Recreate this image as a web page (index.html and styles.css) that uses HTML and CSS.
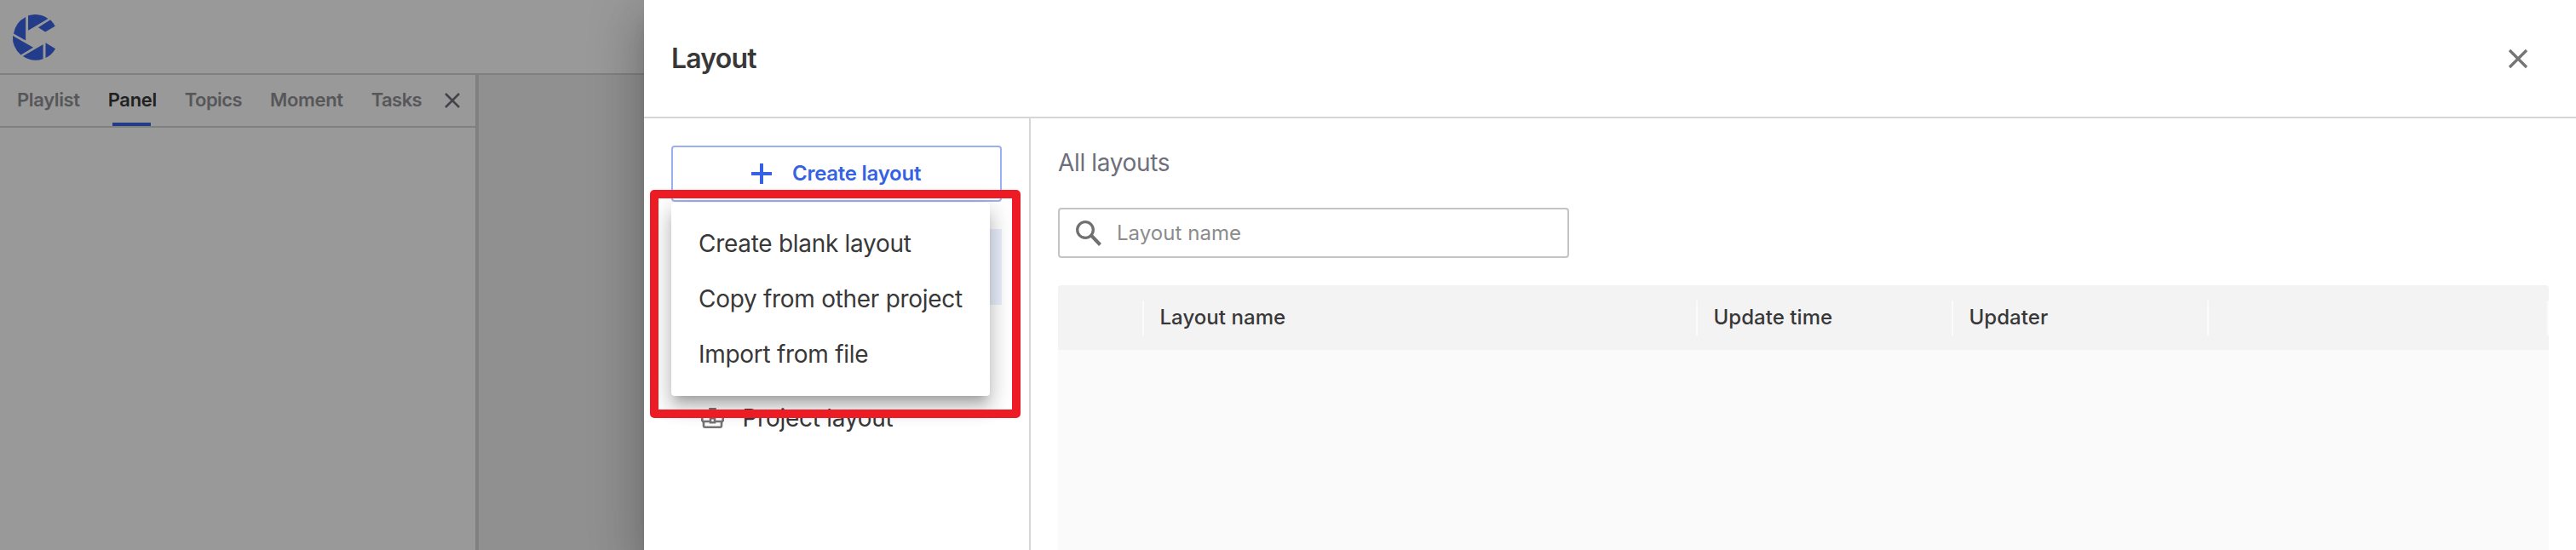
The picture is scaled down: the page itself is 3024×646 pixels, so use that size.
FILE: index.html
```html
<!DOCTYPE html>
<html lang="en">
<head>
<meta charset="utf-8">
<title>Layout</title>
<link rel="stylesheet" href="styles.css">
</head>
<body>
<div class="app">
  <header class="topbar">
    <svg class="logo" viewBox="43 50 154 164" aria-label="Logo">
      <path d="M90 59V143L47 118A82 82 0 0 1 90 59Z"/>
      <path d="M99 54A82 82 0 0 1 170 65L99 107Z"/>
      <path d="M178 69A82 82 0 0 1 195 92L160 112L135 96Z"/>
      <path d="M44 126L117 168L73 194A82 82 0 0 1 44 126Z"/>
      <path d="M80 199L152 157V209A82 82 0 0 1 80 199Z"/>
      <path d="M161 151L196 172A82 82 0 0 1 161 205Z"/>
    </svg>
  </header>
  <div class="workspace">
    <aside class="sidebar">
      <nav class="tabs">
        <span class="tab">Playlist</span>
        <span class="tab active">Panel</span>
        <span class="tab tight">Topics</span>
        <span class="tab">Moment</span>
        <span class="tab tight">Tasks</span>
        <svg class="tabs-close" viewBox="0 0 18 18"><path d="M1 1L17 17M17 1L1 17"/></svg>
      </nav>
    </aside>
    <main class="canvas"></main>
  </div>
</div>
<div class="scrim"></div>
<section class="drawer">
  <header class="drawer-head">
    <h1 class="drawer-title">Layout</h1>
    <svg class="drawer-close" viewBox="0 0 24 24"><path d="M2 2L22 22M22 2L2 22"/></svg>
  </header>
  <div class="drawer-body">
    <aside class="side">
      <button class="create">
        <svg class="plus" viewBox="0 0 24 24"><path d="M12 0V24M0 12H24"/></svg>
        <span class="create-label">Create layout</span>
      </button>
      <div class="side-selected"></div>
      <div class="side-item">
        <svg class="case" viewBox="0 0 27 24"><path d="M10.500 6V1.300H16.500V6M1.300 16V8Q1.300 6 3.300 6H23.700Q25.700 6 25.700 8V16M1 16H10M17 16H26M3 16V21Q3 22.700 4.700 22.700H22.300Q24 22.700 24 21V16M11 12.300H16V17.300H11Z"/></svg>
        <span class="side-label">Project layout</span>
      </div>
      <ul class="menu">
        <li class="menu-item">Create blank layout</li>
        <li class="menu-item">Copy from other project</li>
        <li class="menu-item">Import from file</li>
      </ul>
      <div class="highlight"></div>
    </aside>
    <div class="content">
      <h2 class="content-title">All layouts</h2>
      <div class="search">
        <svg class="search-icon" viewBox="0 0 30 30"><circle cx="11" cy="11" r="9.300"/><path class="handle" d="M18 17.500L28.500 28.500"/></svg>
        <span class="placeholder">Layout name</span>
      </div>
      <div class="table">
        <div class="thead">
          <div class="th"></div>
          <div class="th">Layout name</div>
          <div class="th">Update time</div>
          <div class="th">Updater</div>
          <div class="th"></div>
        </div>
        <div class="tbody"></div>
      </div>
    </div>
  </div>
</section>
</body>
</html>
```
FILE: styles.css
```css
* { box-sizing: border-box; }
body {
  margin: 0;
  height: 646px;
  overflow: hidden;
  position: relative;
  font-family: Inter, "Liberation Sans", sans-serif;
  color: #383838;
  background: #fff;
}
h1, h2, ul { margin: 0; padding: 0; font-weight: 400; }
span, li { white-space: nowrap; }
svg { display: block; fill: none; flex: none; }

.app { display: flex; flex-direction: column; height: 646px; }
.topbar { height: 88px; padding: 17px 0 0 14px; border-bottom: 2px solid #d6d6d6; flex: none; }
.logo { width: 52px; height: 54px; fill: #3a64e6; }
.workspace { display: flex; flex: 1; }
.sidebar { width: 562px; border-right: 4px solid #d6d6d6; }
.canvas { flex: 1; background: #f1f1f1; }
.tabs { display: flex; height: 62px; padding-left: 20px; border-bottom: 2px solid #d6d6d6; font-size: 22px; font-weight: 600; letter-spacing: -.36px; color: #919197; }
.tab { position: relative; line-height: 58px; margin-right: 33px; }
.tight { letter-spacing: -.55px; }
.active { color: #383838; }
.active::after { content: ""; position: absolute; bottom: 0; left: 50%; width: 45px; height: 4px; margin-left: -23px; background: #3a64e6; }
.tabs-close { width: 18px; height: 18px; margin: 21px 0 0 -6.500px; stroke: #70707b; stroke-width: 2.500; }

.scrim { position: absolute; inset: 0; background: rgba(0, 0, 0, .4); }

.drawer {
  position: absolute;
  top: 0; right: 0; bottom: 0; left: 756px;
  display: flex; flex-direction: column;
  background: #fff;
  box-shadow: 0 16px 20px -10px rgba(0, 0, 0, .2), 0 32px 48px 4px rgba(0, 0, 0, .14), 0 12px 60px 10px rgba(0, 0, 0, .12);
}
.drawer-head { display: flex; align-items: center; justify-content: space-between; height: 139px; padding: 0 56px 0 32px; border-bottom: 2px solid #d6d6d6; flex: none; }
.drawer-title { font-size: 32px; font-weight: 600; letter-spacing: -.8px; }
.drawer-close { width: 24px; height: 24px; stroke: #757575; stroke-width: 3.300; }
.drawer-body { display: flex; flex: 1; }

.side { position: relative; width: 454px; padding: 32px 32px 0; border-right: 2px solid #d6d6d6; }
.create { display: flex; align-items: center; width: 388px; height: 66px; padding: 0 0 0 92px; border: 2px solid #9bb0f2; border-radius: 4px; background: #fff; color: #3562e3; font: 600 24px Inter, sans-serif; letter-spacing: -.26px; }
.create-label { padding-bottom: 2px; }
.plus { width: 24px; height: 24px; margin-right: 24px; stroke: #3562e3; stroke-width: 4; }
.side-selected { height: 89px; margin-top: 32px; background: #eaeffc; }
.side-item { display: flex; align-items: center; height: 88px; margin-top: 89px; padding-left: 34.500px; font-size: 28px; letter-spacing: -.27px; }
.case { width: 27px; height: 24px; margin-right: 22px; stroke: #757575; stroke-width: 2.600; }

.menu { position: absolute; left: 32px; top: 99px; width: 374px; height: 227px; padding: 16px 32px; list-style: none; background: #fff; border-radius: 4px; font-size: 28px; letter-spacing: -.29px; box-shadow: 0 10px 10px -6px rgba(0, 0, 0, .2), 0 16px 20px 2px rgba(0, 0, 0, .14), 0 6px 28px 4px rgba(0, 0, 0, .12); }
.menu-item { height: 65px; line-height: 65px; }
.highlight { position: absolute; left: 7px; top: 84px; width: 435px; height: 268px; border: 10px solid #ed1c24; border-radius: 5px; }

.content { flex: 1; display: flex; flex-direction: column; padding: 32px 32px 0; }
.content-title { height: 41px; line-height: 41px; font-size: 28px; letter-spacing: -.36px; color: #6f6f7b; }
.search { display: flex; align-items: center; width: 600px; height: 59px; margin-top: 32px; padding-left: 19px; border: 2px solid #c4c4c4; border-radius: 4px; font-size: 24px; letter-spacing: .05px; color: #8c8c8c; }
.search-icon { width: 30px; height: 30px; margin-right: 18px; stroke: #707070; stroke-width: 3.300; }
.handle { stroke-width: 4; }
.table { flex: 1; display: flex; flex-direction: column; margin-top: 32px; border-radius: 4px 4px 0 0; overflow: hidden; }
.thead { display: grid; grid-template-columns: 101px 650px 300px 300px 1fr; align-items: center; height: 76px; background: #f3f3f3; font-size: 24px; font-weight: 500; letter-spacing: .05px; }
.th { height: 41px; line-height: 39px; padding-left: 18.500px; border-right: 2px solid #fbfbfb; }
.tbody { flex: 1; background: #fafafa; }
```
